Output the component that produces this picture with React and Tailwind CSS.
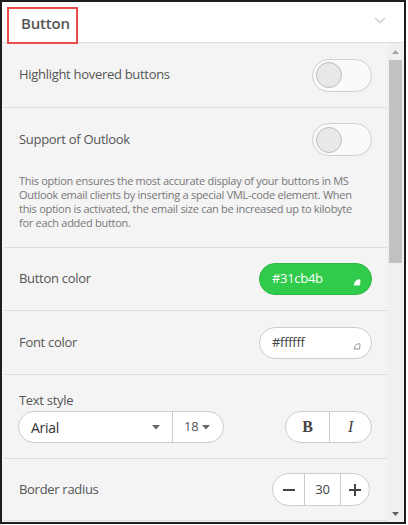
import React from 'react';

const font = { fontFamily: '"Open Sans", "Noto Sans", sans-serif' };

const Toggle = () => (
  <div className="w-[60px] h-[33px] rounded-full border border-[#cfcfcf] bg-[#fafafa] flex items-center pl-[3px]">
    <div className="w-[26px] h-[26px] rounded-full border border-[#bdbdbd] bg-[#e8e8e8]" />
  </div>
);

const Handle = ({ color }) => (
  <svg width="8" height="7" viewBox="0 0 8 7" className="absolute right-[10px] bottom-[8px]">
    <path d="M1 6 L2.6 2.4 Q3.6 0.8 5.6 0.8 L6.6 0.8 Q7 0.8 7 1.4 L6.6 6 Z" fill={color === 'green' ? '#fff' : 'none'} stroke={color === 'green' ? '#fff' : '#888'} strokeWidth="0.9" strokeLinejoin="round" />
  </svg>
);

const Caret = () => (
  <svg width="8" height="5" viewBox="0 0 8 5"><path d="M0 0 L8 0 L4 4.5 Z" fill="#666" /></svg>
);

const Row = ({ children, className = '' }) => (
  <div className={`border-b border-[#dcdcdc] ${className}`}>{children}</div>
);

export default function App() {
  return (
    <div className="w-[408px] h-[525px] bg-white overflow-hidden" style={font}>
      <div className="w-[406px] h-[524px] border-2 border-[#1e1e1e] flex flex-col">
        {/* header */}
        <div className="h-[41px] bg-white border-b border-[#dcdcdc] flex items-center justify-between shrink-0 relative">
          <div className="ml-[5px] mt-[7px] h-[37px] w-[71px] border-2 border-[#ea4a4a] flex items-center pl-[12px] pb-[4px]">
            <span className="text-[15px] font-semibold text-[#555] tracking-[-0.2px]">Button</span>
          </div>
          <svg width="12" height="7" viewBox="0 0 12 7" className="mr-[18px] mb-[3px]">
            <path d="M1 1 L6 5.5 L11 1" fill="none" stroke="#cfcfcf" strokeWidth="1.6" />
          </svg>
        </div>

        <div className="flex flex-1 min-h-0">
          {/* content */}
          <div className="flex-1 bg-[#f4f4f4] pl-[2px] overflow-hidden tracking-[-0.3px]">
            <Row className="h-[65px] flex items-center justify-between pl-[15px] pr-[15px]">
              <span className="text-[13px] text-[#555]">Highlight hovered buttons</span>
              <Toggle />
            </Row>

            <Row className="h-[140px] pl-[15px] pr-[15px] pt-[15px]">
              <div className="flex items-center justify-between">
                <span className="text-[13px] text-[#555]">Support of Outlook</span>
                <Toggle />
              </div>
              <p className="mt-[18px] text-[11px] leading-[14px] text-[#777] whitespace-nowrap tracking-[-0.28px]">
                This option ensures the most accurate display of your buttons in MS<br />
                Outlook email clients by inserting a special VML-code element. When<br />
                this option is activated, the email size can be increased up to kilobyte<br />
                for each added button.
              </p>
            </Row>

            <Row className="h-[63px] flex items-center justify-between pl-[15px] pr-[15px]">
              <span className="text-[13px] text-[#555]">Button color</span>
              <div className="relative w-[113px] h-[32px] rounded-full bg-[#31cb4b] border border-[#2cb844] flex items-center pl-[12px]">
                <span className="text-[13px] text-white">#31cb4b</span>
                <Handle color="green" />
              </div>
            </Row>

            <Row className="h-[64px] flex items-center justify-between pl-[15px] pr-[15px]">
              <span className="text-[13px] text-[#555]">Font color</span>
              <div className="relative w-[113px] h-[32px] rounded-full bg-white border border-[#cccccc] flex items-center pl-[12px]">
                <span className="text-[13px] text-[#444]">#ffffff</span>
                <Handle color="white" />
              </div>
            </Row>

            <Row className="h-[84px] pl-[14px] pr-[15px] pt-[16px]">
              <div className="pl-[1px] text-[13px] text-[#555] leading-[18px]">Text style</div>
              <div className="mt-[2px] flex items-center justify-between">
                <div className="w-[206px] h-[32px] rounded-full bg-white border border-[#cccccc] flex">
                  <div className="w-[154px] border-r border-[#cccccc] flex items-center justify-between pl-[12px] pr-[12px]">
                    <span className="text-[14px] text-[#333]">Arial</span>
                    <Caret />
                  </div>
                  <div className="flex-1 flex items-center pl-[11px] gap-[4px]">
                    <span className="text-[13px] text-[#555]">18</span>
                    <Caret />
                  </div>
                </div>
                <div className="w-[87px] h-[32px] rounded-full bg-white border border-[#cccccc] flex" style={{ fontFamily: '"Liberation Serif", serif' }}>
                  <div className="w-[44px] border-r border-[#cccccc] flex items-center justify-center text-[16px] font-bold text-[#444]">B</div>
                  <div className="flex-1 flex items-center justify-center text-[16px] italic text-[#444]">I</div>
                </div>
              </div>
            </Row>

            <Row className="h-[62px] flex items-center justify-between pl-[15px] pr-[17px]">
              <span className="text-[13px] text-[#555]">Border radius</span>
              <div className="w-[98px] h-[33px] rounded-full bg-white border border-[#cccccc] flex">
                <div className="w-[32px] border-r border-[#cccccc] flex items-center justify-center">
                  <svg width="12" height="2" viewBox="0 0 12 2"><rect width="12" height="2" fill="#444" /></svg>
                </div>
                <div className="w-[36px] border-r border-[#cccccc] flex items-center justify-center text-[13px] text-[#444]">30</div>
                <div className="flex-1 flex items-center justify-center">
                  <svg width="12" height="12" viewBox="0 0 12 12"><rect y="5" width="12" height="2" fill="#444" /><rect x="5" width="2" height="12" fill="#444" /></svg>
                </div>
              </div>
            </Row>
          </div>

          {/* scrollbar */}
          <div className="w-[17px] bg-[#f0f0f0] flex flex-col items-center shrink-0">
            <div className="h-[17px] flex items-center justify-center">
              <svg width="7" height="4" viewBox="0 0 7 4"><path d="M0 4 L3.5 0 L7 4 Z" fill="#a3a3a3" /></svg>
            </div>
            <div className="w-[13px] h-[203px] bg-[#c1c1c1]" />
            <div className="flex-1" />
            <div className="h-[17px] flex items-center justify-center">
              <svg width="7" height="4" viewBox="0 0 7 4"><path d="M0 0 L7 0 L3.5 4 Z" fill="#606060" /></svg>
            </div>
          </div>
        </div>
      </div>
    </div>
  );
}
